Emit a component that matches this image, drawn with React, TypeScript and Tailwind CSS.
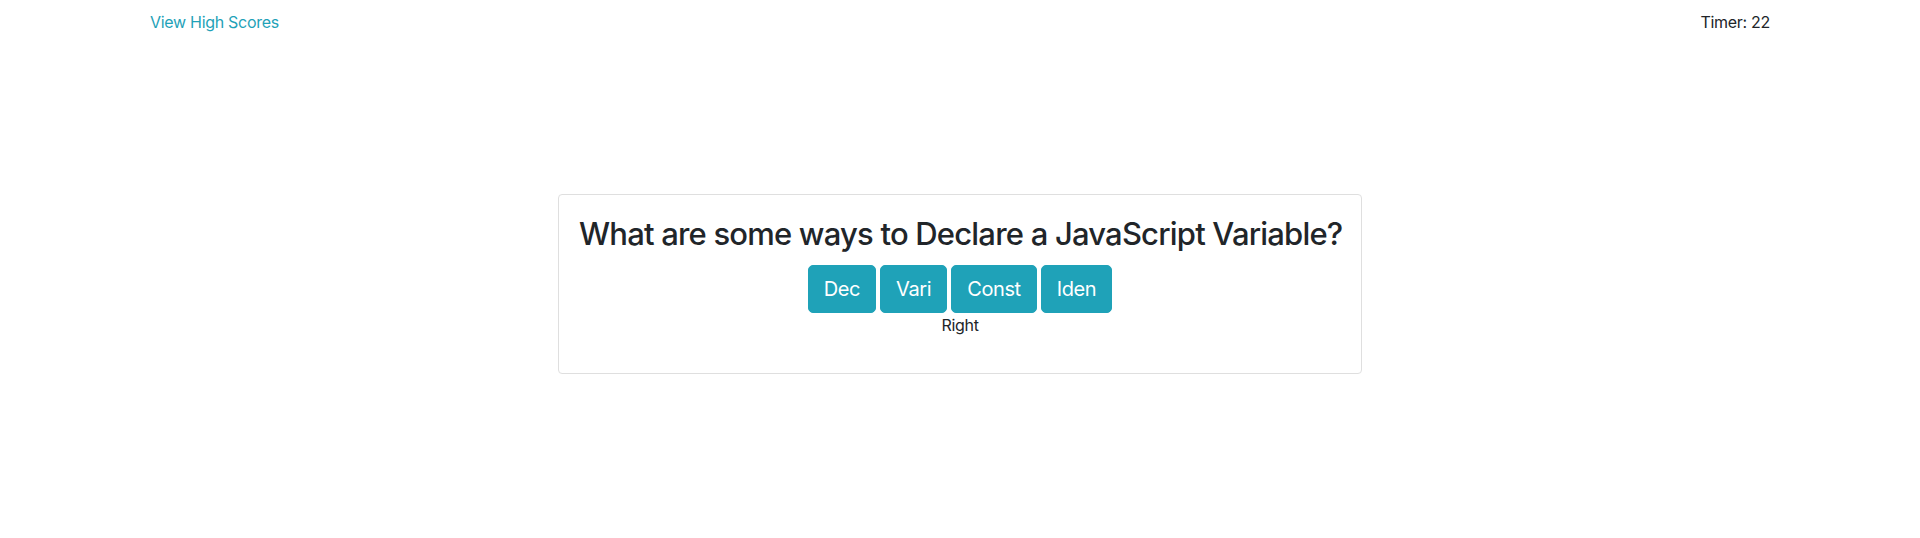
export default function App() {
  const answers = ["Dec", "Vari", "Const", "Iden"];

  return (
    <div
      className="min-h-[538px] bg-white text-[#212529]"
      style={{ fontFamily: "Inter, 'Liberation Sans', sans-serif" }}
    >
      {/* top bar */}
      <div className="flex justify-between px-[150px] pt-[10px] text-[16px] leading-[24px] tracking-[-0.3px]">
        <a href="#" className="text-[#1fa2b8]">
          View High Scores
        </a>
        <span>Timer: 22</span>
      </div>

      {/* question card */}
      <div className="mx-auto mt-[160px] w-[804px] rounded-[4px] border border-[#dfdfdf] p-5 text-center">
        <h2 className="mb-[12px] whitespace-nowrap text-[31px] font-medium leading-[38px] tracking-[-0.8px]">
          What are some ways to Declare a JavaScript Variable?
        </h2>
        <div className="flex justify-center gap-1">
          {answers.map((a) => (
            <button
              key={a}
              className="h-[48px] rounded-[5px] border border-[#1fa2b8] bg-[#1fa2b8] px-[15px] text-[20px] leading-[30px] tracking-[-0.4px] text-white"
            >
              {a}
            </button>
          ))}
        </div>
        <p className="mb-4 text-[16px] leading-[24px] tracking-[-0.3px]">Right</p>
      </div>
    </div>
  );
}
